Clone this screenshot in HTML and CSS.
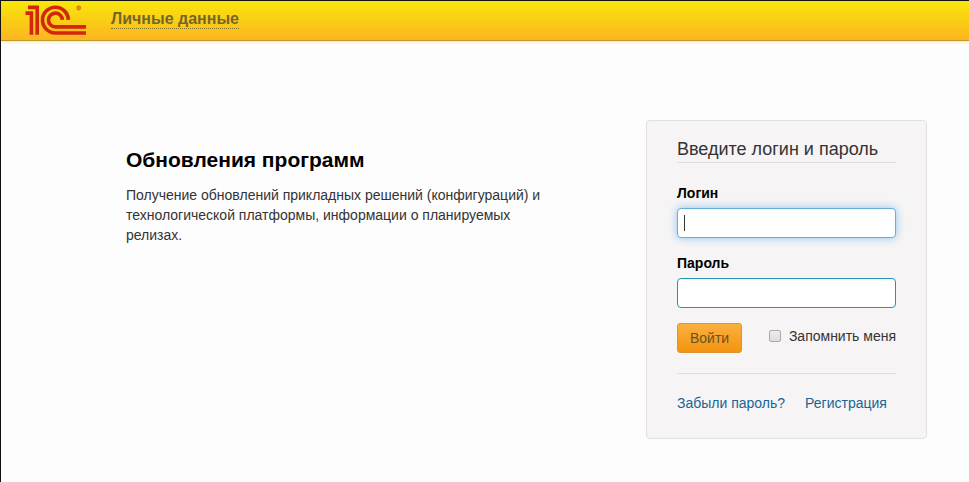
FILE: index.html
```
<!DOCTYPE html>
<html lang="ru">
<head>
<meta charset="UTF-8">
<meta name="viewport" content="width=device-width, initial-scale=1.0">
<title>1С: Обновления программ</title>
<link rel="stylesheet" href="styles.css">
</head>
<body>
    <header class="header">
        <svg class="logo" width="62" height="32" viewBox="0 0 62 32" role="img" aria-label="1С">
            <g fill="none" stroke="#d4260f" stroke-width="3.6">
                <path d="M0.5 9.1H6.4V30.7"/>
                <path d="M3 3.4H12.2V30.7"/>
                <path d="M43.3 15.9A12.9 12.9 0 1 0 30.5 29H61"/>
                <path d="M37.3 15.9A6.9 6.9 0 1 0 30.5 22.9H61"/>
            </g>
            <circle cx="53.7" cy="4" r="2.4" fill="#dc7d10"/>
            <circle cx="53.7" cy="4" r="1" fill="#eda31a"/>
        </svg>
        <a class="header-link" href="#">Личные данные</a>
    </header>

    <main class="content">
        <section class="about">
            <h1>Обновления программ</h1>
            <p>Получение обновлений прикладных решений (конфигураций) и технологической платформы, информации о планируемых релизах.</p>
        </section>

        <form class="login-form">
            <h2>Введите логин и пароль</h2>
            <label class="field-label" for="username">Логин</label>
            <input class="field" type="text" id="username" placeholder=" " autofocus>
            <label class="field-label" for="password">Пароль</label>
            <input class="field" type="password" id="password" placeholder=" ">
            <div class="submit-line">
                <button class="login-button" type="submit">Войти</button>
                <label class="remember"><input type="checkbox">Запомнить меня</label>
            </div>
            <div class="links">
                <a href="#">Забыли пароль?</a>
                <a href="#">Регистрация</a>
            </div>
        </form>
    </main>
</body>
</html>
```

FILE: styles.css
```
* {
    box-sizing: border-box;
}
body {
    margin: 0;
    min-height: 100vh;
    border-top: 1px solid #111;
    border-left: 1px solid #111;
    background-color: #fefdfe;
    color: #333;
    font-family: "Liberation Sans", Arial, sans-serif;
    font-size: 14px;
    line-height: 20px;
}
a {
    color: #1a6496;
    text-decoration: none;
}
a:hover {
    text-decoration: underline;
}
.header {
    display: flex;
    align-items: flex-start;
    gap: 24px;
    height: 40px;
    padding: 3px 24px 0;
    border-bottom: 1px solid #c0982c;
    background: linear-gradient(#f9e60c, #fcb520);
    box-shadow: 0 1px 3px #f5e6b0;
}
.header-link {
    margin-top: 6px;
    border-bottom: 1px dotted #806f20;
    color: #756628;
    font-size: 16px;
    font-weight: bold;
    line-height: 18px;
}
.content {
    display: flex;
    justify-content: space-between;
    align-items: flex-start;
    padding: 79px 42px 0 125px;
}
.about {
    max-width: 440px;
    padding-top: 27px;
}
h1 {
    margin: 0 0 12px;
    color: #000;
    font-size: 21px;
    line-height: 26px;
}
p {
    margin: 0;
}
.login-form {
    width: 281px;
    padding: 15px 30px 25px;
    border: 1px solid #e3dfe1;
    border-radius: 4px;
    background-color: #f6f4f5;
}
h2 {
    margin: 0 0 20px;
    border-bottom: 1px solid #dedcdd;
    font-size: 18px;
    font-weight: normal;
    line-height: 26px;
}
.field-label {
    display: block;
    margin-bottom: 5px;
    color: #000;
    font-weight: bold;
}
.field {
    display: block;
    width: 100%;
    height: 30px;
    margin-bottom: 15px;
    padding: 4px 6px;
    border: 1px solid #1f95b5;
    border-radius: 4px;
    outline: none;
    background-color: #fff;
    color: #333;
    font: inherit;
}
.field:focus {
    border-color: #66afd9;
    box-shadow: 0 0 8px #8cc4ef;
}
/* steady caret while the field is empty */
.field:focus:placeholder-shown {
    background: linear-gradient(#333, #333) 6px center / 1px 16px no-repeat #fff;
    caret-color: transparent;
}
.submit-line {
    display: flex;
    justify-content: space-between;
    align-items: flex-start;
    padding-bottom: 20px;
    border-bottom: 1px solid #dedcdd;
}
.login-button {
    height: 30px;
    padding: 0 12px;
    border: 1px solid #d9952f;
    border-radius: 3px;
    background: linear-gradient(#fbb040, #f3940f);
    color: #6b5020;
    font: inherit;
    cursor: pointer;
}
.remember {
    display: flex;
    align-items: center;
    gap: 8px;
    margin-top: 3px;
}
.remember input {
    appearance: none;
    width: 12px;
    height: 12px;
    margin: 0;
    border: 1px solid #aaa;
    border-radius: 2px;
    background: linear-gradient(#eee, #ddd);
}
.remember input:checked {
    background: #1a6496;
}
.links {
    display: flex;
    gap: 20px;
    padding-top: 19px;
}
```
